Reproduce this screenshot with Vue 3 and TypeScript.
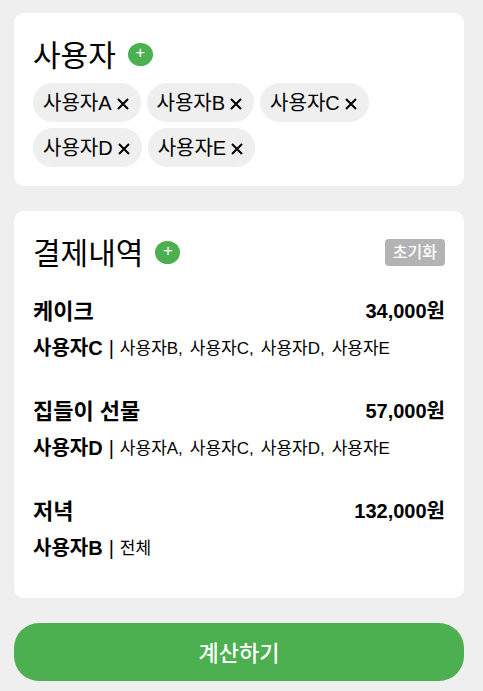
<script setup lang="ts">
import { computed, ref } from 'vue'

interface Payment {
  title: string
  amount: number
  payer: string
  members: string[]
}

const users = ref<string[]>(['사용자A', '사용자B', '사용자C', '사용자D', '사용자E'])

const payments = ref<Payment[]>([
  { title: '케이크', amount: 34000, payer: '사용자C', members: ['사용자B', '사용자C', '사용자D', '사용자E'] },
  { title: '집들이 선물', amount: 57000, payer: '사용자D', members: ['사용자A', '사용자C', '사용자D', '사용자E'] },
  { title: '저녁', amount: 132000, payer: '사용자B', members: ['전체'] },
])

const rows = computed(() =>
  payments.value.map((p) => ({
    ...p,
    price: `${p.amount.toLocaleString('en-US')}원`,
    names: p.members.map((name, i) => (i < p.members.length - 1 ? `${name},` : name)),
  })),
)

function removeUser(index: number): void {
  users.value.splice(index, 1)
}

function reset(): void {
  payments.value = []
}
</script>

<template>
  <main class="page">
    <section class="card">
      <header class="head">
        <h2 class="heading">사용자</h2>
        <button type="button" class="add">+</button>
      </header>
      <ul class="chips">
        <li v-for="(user, i) in users" :key="user" class="chip">
          <span>{{ user }}</span>
          <button type="button" class="remove" @click="removeUser(i)">
            <svg class="cross" viewBox="0 0 12 12">
              <path d="M1 1 11 11M11 1 1 11" />
            </svg>
          </button>
        </li>
      </ul>
    </section>

    <section class="card">
      <header class="head">
        <h2 class="heading">결제내역</h2>
        <button type="button" class="add">+</button>
        <button type="button" class="reset" @click="reset">초기화</button>
      </header>
      <ul class="payments">
        <li v-for="row in rows" :key="row.title" class="payment">
          <div class="summary">
            <h3 class="title">{{ row.title }}</h3>
            <strong class="price">{{ row.price }}</strong>
          </div>
          <div class="detail">
            <strong class="payer">{{ row.payer }}</strong>
            <span class="bar">|</span>
            <span class="names">
              <span v-for="name in row.names" :key="name">{{ name }}</span>
            </span>
          </div>
        </li>
      </ul>
    </section>

    <button type="button" class="calculate">계산하기</button>
  </main>
</template>

<style>
body {
  background: #efefef;
}
</style>

<style scoped>
.page {
  display: flex;
  flex-direction: column;
  gap: 25px;
  padding: 13px 19px 10px 14px;
  color: #000;
  font-family: 'Liberation Sans', 'Noto Sans CJK KR', sans-serif;
  font-size: 20px;
}

button {
  border: 0;
  padding: 0;
  font-family: inherit;
  color: inherit;
  cursor: pointer;
}

h2,
h3,
ul {
  margin: 0;
  padding: 0;
  font-weight: 400;
  list-style: none;
}

.card {
  padding: 19px;
  border-radius: 10px;
  background: #fff;
}

.head {
  display: flex;
  align-items: center;
}

.heading {
  padding-top: 2px;
  font-size: 30px;
  line-height: 43px;
}

.add {
  width: 25px;
  height: 23px;
  margin-left: 12px;
  padding-bottom: 4px;
  border-radius: 50%;
  background: #4caf50;
  color: #fff;
  font-size: 17px;
  line-height: 17px;
}

.chips {
  display: flex;
  flex-wrap: wrap;
  gap: 6px;
  margin-top: 6px;
}

.chip {
  display: flex;
  align-items: center;
  gap: 5px;
  padding: 2px 12px 0 10px;
  border-radius: 20px;
  background: #efefef;
  line-height: 37px;
}

.remove {
  display: flex;
  background: none;
}

.cross {
  width: 12px;
  height: 12px;
  fill: none;
  stroke: #000;
  stroke-width: 2;
}

.reset {
  margin-left: auto;
  padding: 0 8px;
  border-radius: 4px;
  background: #b3b3b3;
  color: #fff;
  font-size: 16px;
  font-weight: 500;
  line-height: 27px;
}

.payments {
  display: flex;
  flex-direction: column;
  gap: 26px;
  padding: 18px 0 12px;
}

.summary {
  display: flex;
  align-items: center;
  justify-content: space-between;
  line-height: 37px;
}

.title {
  font-size: 22px;
  font-weight: 700;
}

.detail {
  display: flex;
  align-items: center;
  gap: 6px;
  line-height: 37px;
}

.names {
  display: flex;
  flex-wrap: wrap;
  gap: 0 7px;
  font-size: 17px;
}

.calculate {
  padding-top: 4px;
  border-radius: 25px;
  background: #4caf50;
  color: #fff;
  font-size: 22px;
  font-weight: 500;
  line-height: 54px;
}
</style>
